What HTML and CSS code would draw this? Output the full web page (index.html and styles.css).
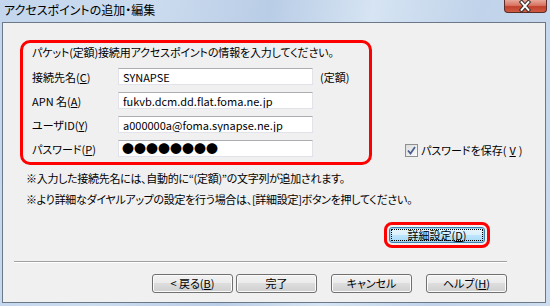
FILE: index.html
```html
<!DOCTYPE html>
<html>
<head>
  <meta charset="utf-8">
  <title>アクセスポイントの追加・編集</title>
  <link rel="stylesheet" href="styles.css">
</head>
<body>
  <div class="window">
    <div class="titlebar">
      <span class="title">アクセスポイントの追加・編集</span>
      <span class="close-btn">
        <svg width="43" height="13" viewBox="0 0 43 13">
          <path d="M18 2 L25 10 M25 2 L18 10" stroke="#3a3030" stroke-width="4" stroke-linecap="square" fill="none"/>
          <path d="M18 2 L25 10 M25 2 L18 10" stroke="#fff" stroke-width="2" stroke-linecap="square" fill="none"/>
        </svg>
      </span>
    </div>

    <div class="client">
      <div class="top-area">
        <div class="highlight-box">
          <div class="intro">パケット(定額)接続用アクセスポイントの情報を入力してください。</div>
          <div class="form-grid">
            <label for="name">接続先名(<u>C</u>)</label>
            <input class="textbox" id="name" type="text" value="SYNAPSE">
            <span class="suffix">(定額)</span>

            <label for="apn">APN 名(<u>A</u>)</label>
            <input class="textbox" id="apn" type="text" value="fukvb.dcm.dd.flat.foma.ne.jp">
            <span></span>

            <label for="user">ユーザID(<u>Y</u>)</label>
            <input class="textbox" id="user" type="text" value="a000000a@foma.synapse.ne.jp">
            <span></span>

            <label for="pass">パスワード(<u>P</u>)</label>
            <input class="textbox password" id="pass" type="text" value="●●●●●●●●">
            <span></span>
          </div>
        </div>

        <label class="save-pw">
          <span class="checkbox">
            <svg width="11" height="11" viewBox="0 0 11 11">
              <path d="M2 5.5 L4.5 8.5 L9 2" stroke="#4a5e92" stroke-width="1.8" fill="none"/>
            </svg>
          </span>
          パスワードを保存(<u>V</u>)
        </label>
      </div>

      <p class="note">※入力した接続先名には、自動的に“(定額)”の文字列が追加されます。</p>
      <p class="note">※より詳細なダイヤルアップの設定を行う場合は、[詳細設定]ボタンを押してください。</p>

      <div class="details-row">
        <span class="ring"><button class="btn btn-focus">詳細設定(<u>D</u>)</button></span>
      </div>

      <div class="footer">
        <div class="separator"></div>
        <div class="buttons">
          <button class="btn">&lt;&nbsp;戻る(<u>B</u>)</button>
          <button class="btn btn-done">完了</button>
          <button class="btn">キャンセル</button>
          <button class="btn">ヘルプ(<u>H</u>)</button>
        </div>
      </div>
    </div>
  </div>
</body>
</html>
```

FILE: styles.css
```css
* {
  box-sizing: border-box;
}

html, body {
  margin: 0;
}

body {
  width: 550px;
  height: 306px;
  overflow: hidden;
  font-family: "Noto Sans CJK JP", sans-serif;
  font-size: 11px;
  font-feature-settings: "palt";
  color: #000;
}

.window {
  width: 550px;
  height: 306px;
  display: flex;
  flex-direction: column;
  padding: 0 4px 3px 2px;
  background: linear-gradient(100deg, #c3d6ed 0%, #ccdcef 25%, #b9cde6 45%, #d6e4f3 62%, #c0d3ea 80%, #cddcee 100%);
}

.titlebar {
  height: 22px;
  display: flex;
  align-items: flex-start;
}

.title {
  margin: 2px 0 0 2px;
  font-size: 12px;
  line-height: 16px;
  color: #000;
}

.close-btn {
  margin-left: auto;
  margin-right: -1px;
  width: 43px;
  height: 13px;
  display: flex;
  border: 1px solid #5b2d26;
  border-top: none;
  border-radius: 0 0 4px 4px;
  background: linear-gradient(#e8a899 0%, #d97462 45%, #c2412b 55%, #cf5a42 100%);
}

.close-btn svg {
  display: block;
  margin-left: -1px;
}

.client {
  flex: 1;
  display: flex;
  flex-direction: column;
  background: #f0f0f0;
  border: 1px solid #6b7888;
}

.top-area {
  display: flex;
  align-items: flex-end;
  margin: 17px 0 0 17px;
}

.highlight-box {
  width: 352px;
  height: 125px;
  border: 3px solid #ff0000;
  border-radius: 10px;
  padding: 1px 0 5px 9px;
}

.intro {
  line-height: 16px;
  letter-spacing: -0.15px;
}

.form-grid {
  margin-top: 8px;
  display: grid;
  grid-template-columns: 79px 195px auto;
  grid-auto-rows: 17px;
  column-gap: 7px;
  row-gap: 7px;
  align-items: center;
}

.form-grid label {
  line-height: 16px;
}

.textbox {
  width: 195px;
  height: 17px;
  margin: 0;
  padding: 0 0 0 4px;
  font-family: inherit;
  font-size: 11px;
  font-feature-settings: "palt";
  line-height: 15px;
  color: #000;
  background: #fff;
  border: 1px solid #e2e3ea;
  border-top-color: #abadb3;
  outline: none;
}

.textbox.password {
  font-size: 12px;
  font-feature-settings: normal;
  padding-left: 3px;
}

.suffix {
  line-height: 16px;
}

.save-pw {
  display: flex;
  align-items: center;
  gap: 3px;
  margin: 0 0 8px 33px;
  line-height: 14px;
}

.checkbox {
  width: 13px;
  height: 13px;
  display: flex;
  align-items: center;
  justify-content: center;
  border: 1px solid #8e8f8f;
  background: linear-gradient(135deg, #dcdcdc, #fbfbfb);
}

.note {
  margin: 5px 0 0 23px;
  line-height: 16px;
  letter-spacing: -0.3px;
}

.details-row {
  display: flex;
  justify-content: flex-end;
  padding-right: 55px;
  margin-top: 15px;
}

.ring {
  display: flex;
  padding: 2px;
  border: 3px solid #ff0000;
  border-radius: 8px;
}

.btn {
  width: 81px;
  height: 19px;
  margin: 0;
  padding: 0;
  font-family: inherit;
  font-size: 11px;
  font-feature-settings: "palt";
  line-height: 17px;
  color: #000;
  border: 1px solid #707070;
  border-radius: 3px;
  background: linear-gradient(#f2f2f2 0%, #ebebeb 50%, #dddddd 50%, #cfcfcf 100%);
  box-shadow: inset 0 0 0 1px #fbfbfb;
}

.btn-focus {
  width: 96px;
  height: 16px;
  line-height: 14px;
  border-color: #3c7fb1;
  background: linear-gradient(#eaf6fd 0%, #d9f0fc 50%, #bee6fd 50%, #a7d9f5 100%);
  box-shadow: inset 0 0 0 1px #9fd2ee;
  outline: 1px dotted #000;
  outline-offset: -3px;
}

.footer {
  margin-top: auto;
  padding-bottom: 9px;
}

.separator {
  height: 2px;
  margin: 0 38px 0 11px;
  border-top: 1px solid #a0a0a0;
  border-bottom: 1px solid #ffffff;
}

.buttons {
  display: flex;
  justify-content: flex-end;
  padding-right: 38px;
  margin-top: 11px;
  gap: 14px;
}

.btn-done {
  margin-left: -11px;
}
```
